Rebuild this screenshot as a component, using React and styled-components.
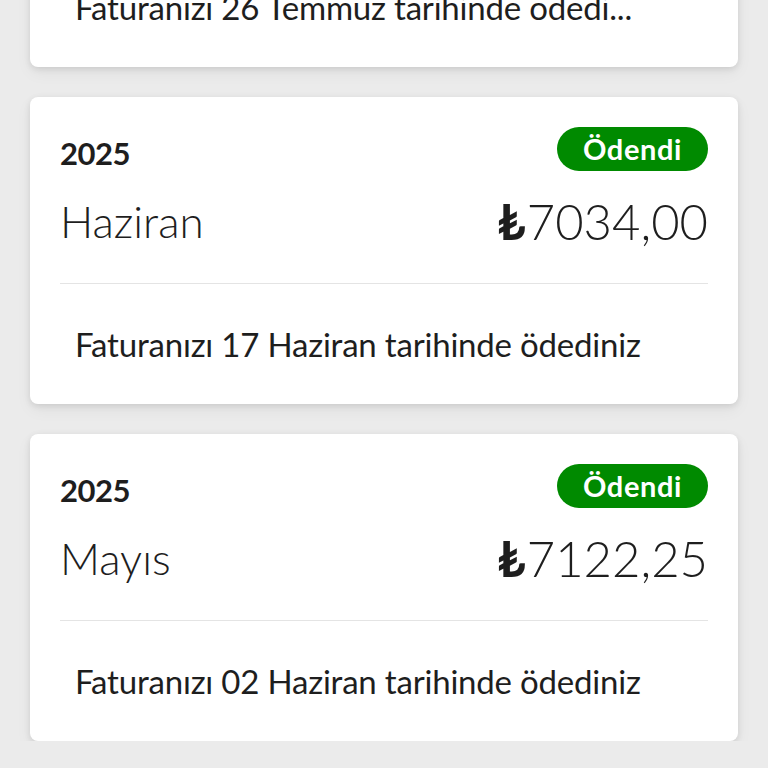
import React from "react";
import styled, { createGlobalStyle } from "styled-components";

const Global = createGlobalStyle`
  html, body { margin: 0; padding: 0; background: #ebebeb; }
  body { font-family: "Lato", "Open Sans", sans-serif; color: #1e1e1e; overflow: hidden; }
`;

const Page = styled.div`
  display: flex;
  flex-direction: column;
  gap: 30px;
  padding: 0 30px;
  margin-top: -240px;
`;

const Card = styled.section`
  background: #ffffff;
  border-radius: 8px;
  box-shadow: 0 2px 6px rgba(0, 0, 0, 0.1), 0 6px 16px rgba(0, 0, 0, 0.05);
  display: flex;
  flex-direction: column;
`;

const Head = styled.div`
  padding: 30px 30px 0;
  display: flex;
  flex-direction: column;
`;

const TopRow = styled.div`
  height: 44px;
  display: flex;
  justify-content: space-between;
  align-items: flex-end;
`;

const Year = styled.span`
  font-size: 31px;
  font-weight: 700;
  line-height: 36px;
  letter-spacing: -0.5px;
`;

const Badge = styled.span`
  height: 44px;
  padding: 0 26px;
  border-radius: 22px;
  background: #008a00;
  color: #fff;
  font-size: 29px;
  font-weight: 700;
  letter-spacing: 0.6px;
  line-height: 44px;
  display: inline-flex;
  align-items: center;
`;

const MainRow = styled.div`
  margin-top: 22px;
  height: 56px;
  display: flex;
  justify-content: space-between;
  align-items: center;
`;

const Month = styled.span`
  font-size: 44px;
  font-weight: 300;
  line-height: 56px;
`;

const Amount = styled.span`
  font-size: 49px;
  font-weight: 300;
  line-height: 56px;
`;

const Currency = styled.span`
  font-weight: 700;
  margin-right: 1px;
`;

const Divider = styled.hr`
  margin: 34px 30px 0;
  border: 0;
  height: 1px;
  background: #e4e4e4;
`;

const Note = styled.div`
  height: 120px;
  padding: 0 45px;
  display: flex;
  align-items: center;
  font-size: 33px;
  letter-spacing: -0.2px;
  white-space: nowrap;
`;

const bills = [
  { year: "2025", month: "Temmuz", amount: "7034,00", note: "Faturanızı 26 Temmuz tarihinde ödedi..." },
  { year: "2025", month: "Haziran", amount: "7034,00", note: "Faturanızı 17 Haziran tarihinde ödediniz" },
  { year: "2025", month: "Mayıs", amount: "7122,25", note: "Faturanızı 02 Haziran tarihinde ödediniz" },
];

export default function App() {
  return (
    <>
      <Global />
      <Page>
        {bills.map((b, i) => (
          <Card key={i}>
            <Head>
              <TopRow>
                <Year>{b.year}</Year>
                <Badge>Ödendi</Badge>
              </TopRow>
              <MainRow>
                <Month>{b.month}</Month>
                <Amount>
                  <Currency>₺</Currency>
                  {b.amount}
                </Amount>
              </MainRow>
            </Head>
            <Divider />
            <Note>{b.note}</Note>
          </Card>
        ))}
      </Page>
    </>
  );
}
